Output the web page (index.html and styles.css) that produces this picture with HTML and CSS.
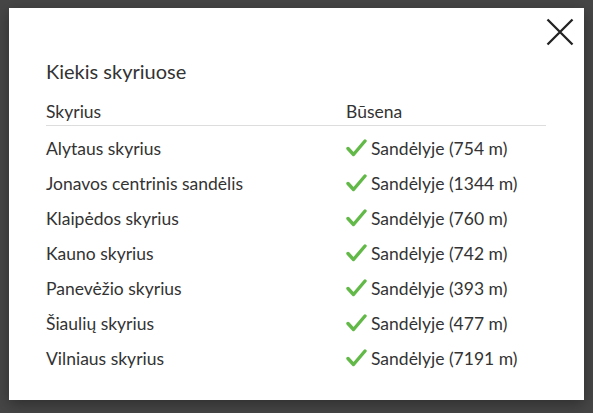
FILE: index.html
```html
<!DOCTYPE html>
<html lang="lt">
<head>
<meta charset="utf-8">
<title>Kiekis skyriuose</title>
<link rel="stylesheet" href="styles.css">
</head>
<body>
<div class="overlay">
  <div class="modal">
    <button class="close" aria-label="Uždaryti">
      <svg width="28" height="28" viewBox="0 0 28 28"><path d="M1.5 1.5 L26.5 26.5 M26.5 1.5 L1.5 26.5" stroke="#222" stroke-width="2.3" fill="none"/></svg>
    </button>
    <h2 class="title">Kiekis skyriuose</h2>
    <div class="table">
      <div class="row head"><div>Skyrius</div><div>Būsena</div></div>
      <div class="body">
        <div class="row"><div>Alytaus skyrius</div><div class="status"><svg class="check" width="21" height="18" viewBox="0 0 21 18"><polyline points="2,9.5 7.5,15.5 19,2" /></svg>Sandėlyje (754 m)</div></div>
        <div class="row"><div>Jonavos centrinis sandėlis</div><div class="status"><svg class="check" width="21" height="18" viewBox="0 0 21 18"><polyline points="2,9.5 7.5,15.5 19,2" /></svg>Sandėlyje (1344 m)</div></div>
        <div class="row"><div>Klaipėdos skyrius</div><div class="status"><svg class="check" width="21" height="18" viewBox="0 0 21 18"><polyline points="2,9.5 7.5,15.5 19,2" /></svg>Sandėlyje (760 m)</div></div>
        <div class="row"><div>Kauno skyrius</div><div class="status"><svg class="check" width="21" height="18" viewBox="0 0 21 18"><polyline points="2,9.5 7.5,15.5 19,2" /></svg>Sandėlyje (742 m)</div></div>
        <div class="row"><div>Panevėžio skyrius</div><div class="status"><svg class="check" width="21" height="18" viewBox="0 0 21 18"><polyline points="2,9.5 7.5,15.5 19,2" /></svg>Sandėlyje (393 m)</div></div>
        <div class="row"><div>Šiaulių skyrius</div><div class="status"><svg class="check" width="21" height="18" viewBox="0 0 21 18"><polyline points="2,9.5 7.5,15.5 19,2" /></svg>Sandėlyje (477 m)</div></div>
        <div class="row"><div>Vilniaus skyrius</div><div class="status"><svg class="check" width="21" height="18" viewBox="0 0 21 18"><polyline points="2,9.5 7.5,15.5 19,2" /></svg>Sandėlyje (7191 m)</div></div>
      </div>
    </div>
  </div>
</div>
</body>
</html>
```
FILE: styles.css
```css
* { box-sizing: border-box; }
html, body { margin: 0; height: 100%; }
body {
  background: #464646;
  font-family: Lato, "Open Sans", sans-serif;
  color: #333;
}
.overlay {
  padding: 8px 9px;
}
.modal {
  position: relative;
  width: 575px;
  height: 392px;
  background: #fff;
  padding: 51px 38px 0 37px;
  box-shadow: 0 4px 14px rgba(0,0,0,0.35);
}
.close {
  position: absolute;
  top: 9px;
  right: 9px;
  width: 30px;
  height: 30px;
  padding: 0;
  border: 0;
  background: transparent;
  display: flex;
  align-items: center;
  justify-content: center;
}
.title {
  margin: 0;
  font-size: 20px;
  font-weight: 400;
  line-height: 24px;
  color: #333;
}
.table {
  margin-top: 17px;
  font-size: 17.5px;
}
.row {
  display: grid;
  grid-template-columns: 300px 1fr;
  line-height: 35px;
}
.row.head {
  line-height: 24px;
  padding-bottom: 1px;
  border-bottom: 1px solid #ddd;
}
.body {
  padding-top: 5px;
}
.status {
  display: flex;
  align-items: center;
  gap: 4px;
}
.check {
  flex: none;
  margin-top: -2px;
  fill: none;
  stroke: #62b947;
  stroke-width: 3.4;
  stroke-linecap: round;
  stroke-linejoin: round;
}
```
